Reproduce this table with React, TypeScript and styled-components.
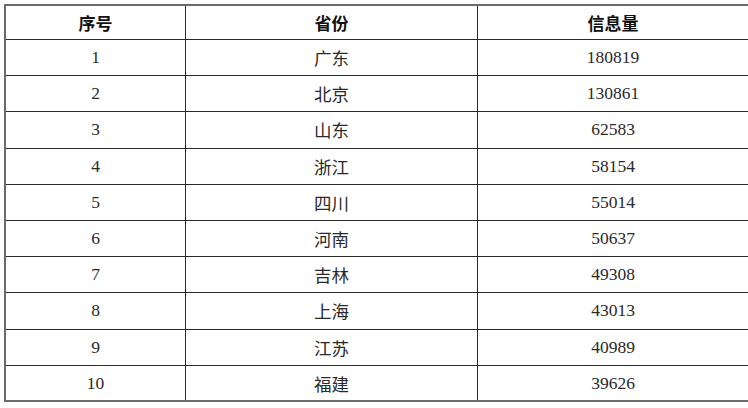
import React from 'react';
import styled, { createGlobalStyle } from 'styled-components';

const GlobalStyle = createGlobalStyle`
  html, body {
    margin: 0;
    padding: 0;
    background: #fff;
  }
`;

const Page = styled.div`
  padding: 4px 0 0 4px;
  width: 748px;
  height: 408px;
  box-sizing: border-box;
`;

const Table = styled.table`
  width: 740px;
  border-collapse: collapse;
  table-layout: fixed;
  border: 2px solid #6a6a6a;
`;

const HeadCell = styled.th<{ w: number }>`
  width: ${p => p.w}px;
  height: 33px;
  padding: 0;
  border: 1px solid #2a2a2a;
  font-family: "Noto Sans CJK SC", "Liberation Sans", sans-serif;
  font-weight: 700;
  font-size: 17px;
  color: #111;
  text-align: center;
  vertical-align: middle;
`;

const Row = styled.tr`
  height: 36.2px;
`;

const Cell = styled.td`
  padding: 0;
  border: 1px solid #2a2a2a;
  font-family: "Liberation Serif", "Noto Sans CJK SC", serif;
  font-size: 17.5px;
  color: #2a2a2a;
  text-align: center;
  vertical-align: middle;
`;

const rows: [number, string, number][] = [
  [1, '广东', 180819],
  [2, '北京', 130861],
  [3, '山东', 62583],
  [4, '浙江', 58154],
  [5, '四川', 55014],
  [6, '河南', 50637],
  [7, '吉林', 49308],
  [8, '上海', 43013],
  [9, '江苏', 40989],
  [10, '福建', 39626],
];

const App: React.FC = () => (
  <>
    <GlobalStyle />
    <Page>
      <Table>
        <thead>
          <tr>
            <HeadCell w={179}>序号</HeadCell>
            <HeadCell w={291}>省份</HeadCell>
            <HeadCell w={270}>信息量</HeadCell>
          </tr>
        </thead>
        <tbody>
          {rows.map(([n, name, count]) => (
            <Row key={n}>
              <Cell>{n}</Cell>
              <Cell>{name}</Cell>
              <Cell>{count}</Cell>
            </Row>
          ))}
        </tbody>
      </Table>
    </Page>
  </>
);

export default App;
